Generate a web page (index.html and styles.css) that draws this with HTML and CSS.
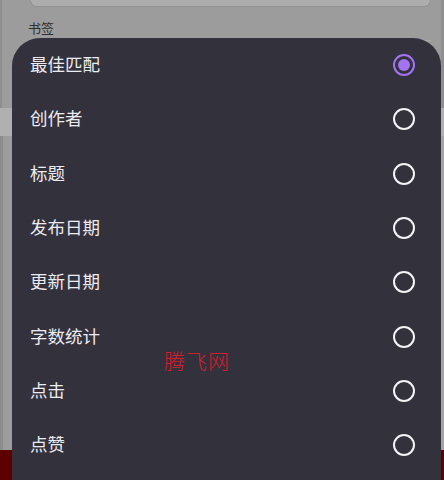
FILE: index.html
```html
<!DOCTYPE html>
<html lang="zh">
<head>
<meta charset="utf-8">
<link rel="stylesheet" href="styles.css">
</head>
<body>
<div class="screen">
  <div class="backdrop">
    <div class="dialog">
      <div class="card"></div>
      <div class="label">书签</div>
      <div class="field"></div>
    </div>
    <div class="strip"></div>
    <div class="lower"></div>
    <div class="redbar"></div>
  </div>
  <div class="sheet">
    <div class="row"><span>最佳匹配</span><span class="radio checked"></span></div>
    <div class="row"><span>创作者</span><span class="radio"></span></div>
    <div class="row"><span>标题</span><span class="radio"></span></div>
    <div class="row"><span>发布日期</span><span class="radio"></span></div>
    <div class="row"><span>更新日期</span><span class="radio"></span></div>
    <div class="row"><span>字数统计</span><span class="radio"></span></div>
    <div class="row"><span>点击</span><span class="radio"></span></div>
    <div class="row"><span>点赞</span><span class="radio"></span></div>
    <div class="watermark">腾飞网</div>
  </div>
</div>
</body>
</html>
```
FILE: styles.css
```css
* { box-sizing: border-box; }
html, body { margin: 0; padding: 0; }
body {
  width: 444px;
  height: 480px;
  overflow: hidden;
  font-family: "Noto Sans CJK SC", "Noto Sans", sans-serif;
}
.screen {
  position: relative;
  width: 444px;
  height: 480px;
  background: #8f8f8f;
}
.backdrop {
  display: flex;
  flex-direction: column;
  height: 480px;
}
.dialog {
  margin: 0 3px 0 2px;
  height: 108px;
  background: #9c9c9c;
  display: flex;
  flex-direction: column;
}
.card {
  margin: 0 10px 0 28px;
  height: 7px;
  background: #adadad;
  border: 1px solid #939393;
  border-top: none;
  border-radius: 0 0 10px 10px;
}
.label {
  margin: 12px 0 0 26px;
  font-size: 13px;
  line-height: 18px;
  color: #2f2f2f;
}
.field {
  margin: 3px 10px 0 28px;
  border-top: 1px solid #a8a8a8;
}
.strip {
  height: 28px;
  background: #b0b0b0;
}
.lower {
  flex: 1;
  background: #9c9c9c;
  border-left: 3px solid #8c8c8c;
  border-right: 3px solid #a5a5a5;
}
.redbar {
  height: 30px;
  background: #5c0000;
}
.sheet {
  position: absolute;
  left: 12px;
  top: 38px;
  width: 429px;
  height: 442px;
  background: #33313c;
  border-radius: 28px 28px 0 0;
}
.row {
  height: 54.3px;
  display: flex;
  align-items: center;
  justify-content: space-between;
  padding: 0 26px 2px 18px;
  font-size: 17.5px;
  color: #ecebf0;
}
.row > span:first-child {
  line-height: 22px;
}
.radio {
  width: 22px;
  height: 22px;
  margin-top: 2px;
  border: 2px solid #f4f4f6;
  border-radius: 50%;
  display: flex;
  align-items: center;
  justify-content: center;
}
.radio.checked {
  border-color: #a274f2;
}
.radio.checked::after {
  content: "";
  width: 12px;
  height: 12px;
  border-radius: 50%;
  background: #a274f2;
}
.watermark {
  position: absolute;
  left: 152px;
  top: 309px;
  font-size: 21px;
  line-height: 26px;
  color: #d0202e;
  font-weight: 300;
  letter-spacing: 1px;
}
```
